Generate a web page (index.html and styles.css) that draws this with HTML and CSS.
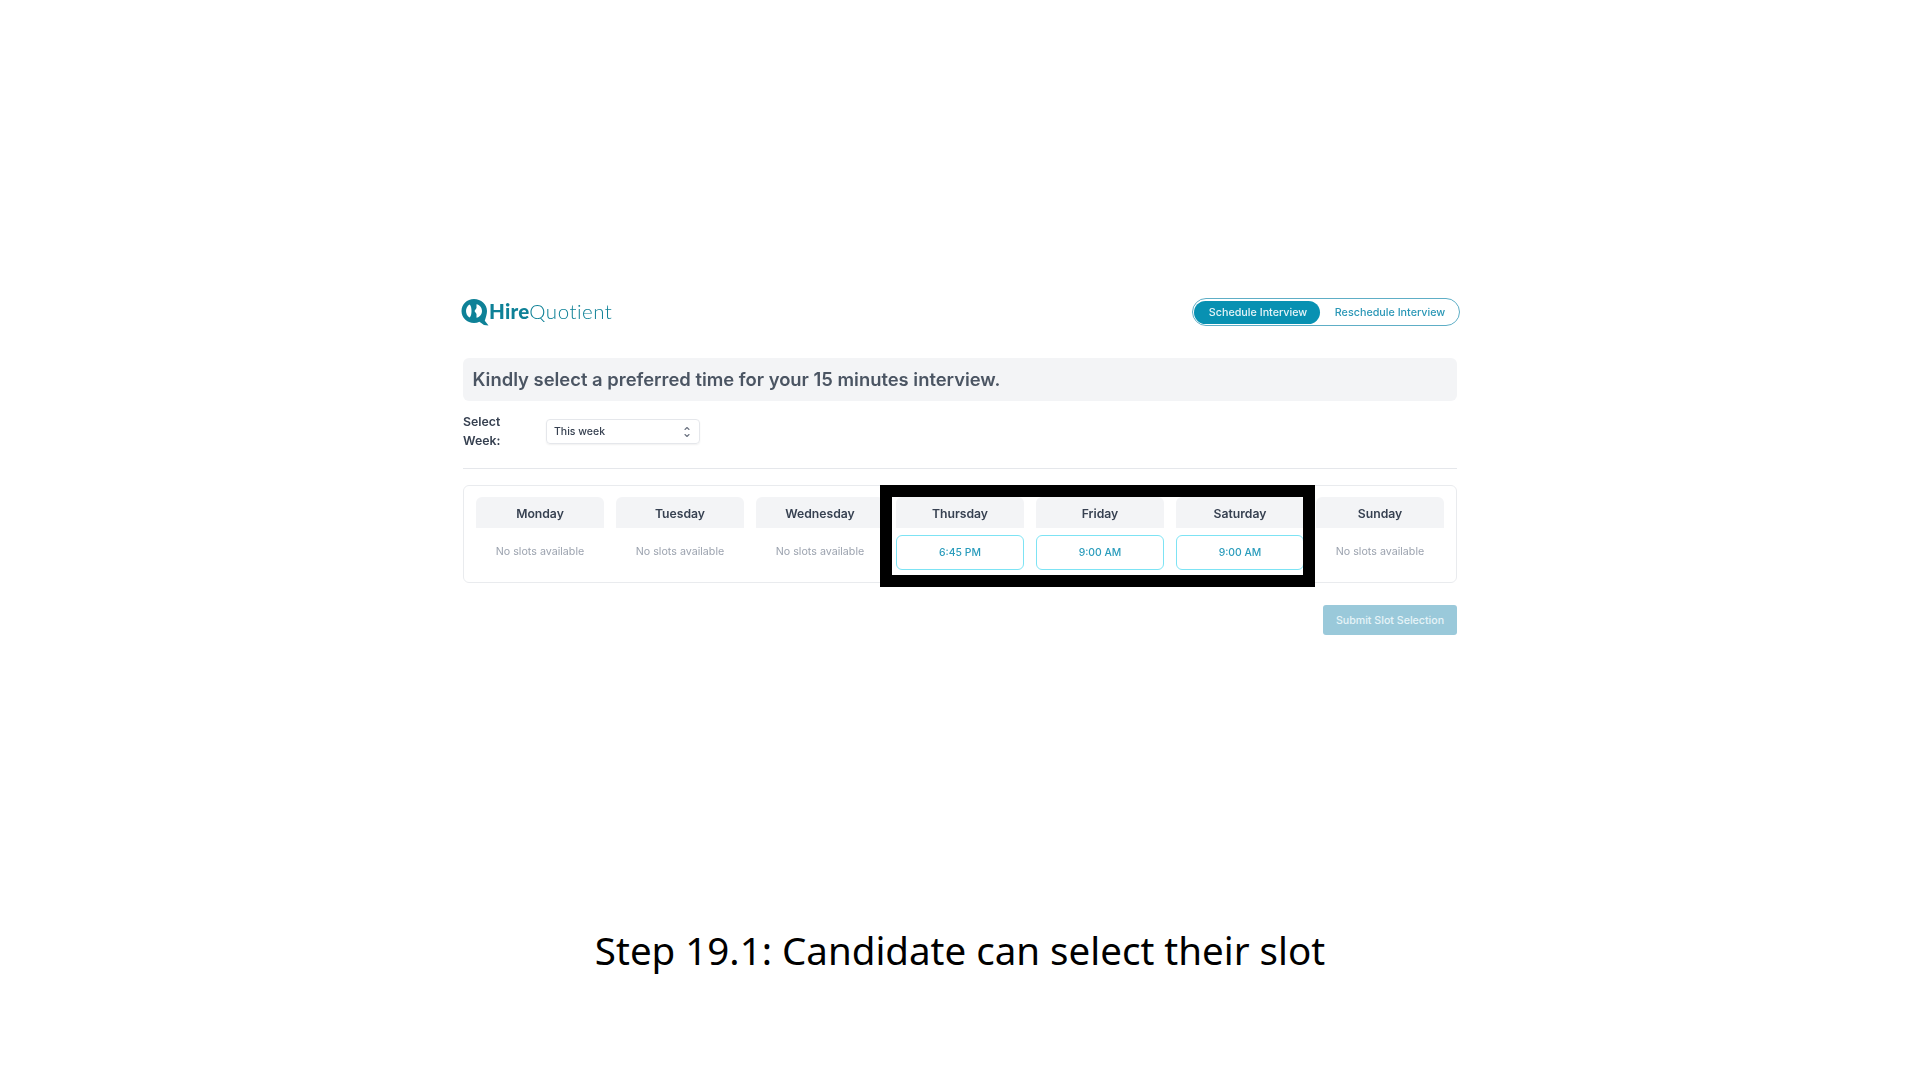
FILE: index.html
```html
<!DOCTYPE html>
<html lang="en">
<head>
<meta charset="utf-8">
<title>Step 19.1</title>
<link rel="stylesheet" href="styles.css">
</head>
<body>
<main class="shot">
  <div class="app">
    <header class="top">
      <div class="logo">
        <svg class="logo-mark" viewBox="0 0 28 28" aria-hidden="true">
          <path fill="#0e8197" d="M13 1C6 1 .5 6.400.5 13S6 25 13 25c2 0 3.800-.4 5.400-1.200L23 27l4.500.5-3.700-4.700C25 19 26 16 26 13 26 6.400 20 1 13 1Z"/>
          <path fill="#fff" d="M8.500 6.500C6.200 8 5 10.500 5 13s1.200 5 3.500 6.500c1.500-1.200 2-3.500 2-6.500s-.5-5.300-2-6.500ZM15.500 6.200c3 .6 5.500 3.300 5.500 6.800s-2.500 6.200-5.500 6.800v-3.800l-2-3 2-3Z"/>
        </svg>
        <span class="logo-text"><b>Hire</b>Quotient</span>
      </div>
      <nav class="toggle">
        <span class="toggle-item is-active">Schedule Interview</span>
        <span class="toggle-item">Reschedule Interview</span>
      </nav>
    </header>

    <h1 class="prompt">Kindly select a preferred time for your 15 minutes interview.</h1>

    <div class="week-row">
      <label class="week-label">Select Week:</label>
      <div class="select">
        <span>This week</span>
        <svg class="select-icon" viewBox="0 0 10 16" aria-hidden="true">
          <path d="M3 5.500 5 3.500l2 2M3 10.500l2 2 2-2" fill="none" stroke="#6b7280" stroke-width="1.100" stroke-linecap="round" stroke-linejoin="round"/>
        </svg>
      </div>
    </div>

    <hr class="rule">

    <section class="week">
      <div class="day"><h2 class="day-name">Monday</h2><p class="none">No slots available</p></div>
      <div class="day"><h2 class="day-name">Tuesday</h2><p class="none">No slots available</p></div>
      <div class="day"><h2 class="day-name">Wednesday</h2><p class="none">No slots available</p></div>
      <div class="day"><h2 class="day-name">Thursday</h2><button class="slot">6:45 PM</button></div>
      <div class="day"><h2 class="day-name">Friday</h2><button class="slot">9:00 AM</button></div>
      <div class="day"><h2 class="day-name">Saturday</h2><button class="slot">9:00 AM</button></div>
      <div class="day"><h2 class="day-name">Sunday</h2><p class="none">No slots available</p></div>
      <div class="highlight"></div>
    </section>

    <div class="actions">
      <button class="submit">Submit Slot Selection</button>
    </div>
  </div>

  <p class="caption">Step 19.1: Candidate can select their slot</p>
</main>
</body>
</html>
```
FILE: styles.css
```css
* { box-sizing: border-box; }
html, body { margin: 0; padding: 0; background: #fff; }
body { font-family: Inter, "Liberation Sans", sans-serif; color: #374151; }

.shot {
  width: 994px;
  height: 1080px;
  margin: 0 auto;
  padding-top: 298px;
  display: flex;
  flex-direction: column;
}
.app { filter: blur(0.35px); }

.top {
  height: 28px;
  display: flex;
  justify-content: space-between;
  align-items: center;
  margin-right: -3px;
}
.logo { display: flex; align-items: center; margin-left: -2px; }
.logo-mark { width: 28px; height: 28px; display: block; }
.logo-text {
  font-family: Lato, sans-serif;
  font-size: 20.500px;
  font-weight: 300;
  line-height: 24px;
  color: #0e8197;
  letter-spacing: 0.5px;
  position: relative;
  top: -1px;
}
.logo-text b { font-weight: 900; color: #0e8197; letter-spacing: 0.2px; }

.toggle {
  height: 28px;
  width: 268px;
  padding: 1.500px 1.500px 1.500px 0.500px;
  display: flex;
  align-items: stretch;
  border: 1px solid #5eaec6;
  border-radius: 14px;
}
.toggle-item {
  display: flex;
  align-items: center;
  justify-content: center;
  padding-left: 3px;
  font-size: 10.750px;
  font-weight: 500;
  color: #2a97b6;
  flex: 1;
}
.toggle-item.is-active {
  flex: 0 0 126px;
  background: #0891b2;
  color: #e6f4f8;
  border-radius: 12px;
}

.prompt {
  margin: 32px 0 0;
  height: 43px;
  padding: 0 9.500px 2px;
  display: flex;
  align-items: center;
  background: #f3f4f6;
  border-radius: 6px;
  font-size: 18.400px;
  font-weight: 600;
  color: #4b5563;
}

.week-row {
  margin-top: 12px;
  display: flex;
  align-items: center;
}
.week-label {
  width: 83px;
  padding-right: 30px;
  font-size: 12.300px;
  font-weight: 600;
  line-height: 18.500px;
  color: #374151;
}
.select {
  width: 154px;
  height: 25px;
  padding: 0 7px;
  display: flex;
  align-items: center;
  justify-content: space-between;
  border: 1px solid #e5e7eb;
  border-radius: 4px;
  box-shadow: 0 1px 2px rgba(0, 0, 0, 0.06);
  font-size: 10.500px;
  font-weight: 500;
  color: #374151;
}
.select-icon { width: 10px; height: 16px; display: block; }

.rule {
  margin: 18px 0 0;
  border: 0;
  border-top: 1px solid #e5e7eb;
}

.week {
  position: relative;
  margin-top: 16px;
  height: 98px;
  padding: 11px 12px 12px;
  display: grid;
  grid-template-columns: repeat(7, 1fr);
  column-gap: 12px;
  align-content: start;
  border: 1px solid #e9ebee;
  border-radius: 6px;
}
.day { display: flex; flex-direction: column; min-width: 0; }
.day-name {
  margin: 0;
  height: 31px;
  padding-top: 1px;
  display: flex;
  align-items: center;
  justify-content: center;
  background: #f3f4f6;
  border-radius: 6px 6px 0 0;
  font-size: 12.200px;
  font-weight: 600;
  color: #374151;
}
.none {
  margin: 16px 0 0;
  text-align: center;
  font-size: 10.700px;
  line-height: 16px;
  color: #9ca3af;
}
.slot {
  margin-top: 7px;
  height: 35px;
  padding: 0;
  background: #fff;
  border: 1px solid #7de3f4;
  border-radius: 6px;
  font-family: inherit;
  font-size: 10.400px;
  font-weight: 500;
  color: #2a9cbc;
}
.highlight {
  position: absolute;
  left: 416px;
  top: -1px;
  width: 435px;
  height: 102px;
  border: 12px solid #000;
}

.actions {
  margin-top: 22px;
  display: flex;
  justify-content: flex-end;
}
.submit {
  width: 134px;
  height: 30px;
  padding: 0;
  background: #9ac9da;
  border: 0;
  border-radius: 3px;
  font-family: inherit;
  font-size: 10.650px;
  font-weight: 500;
  color: #e6f4f8;
}

.caption {
  margin: 290px 0 0;
  text-align: center;
  font-family: "Noto Sans", sans-serif;
  font-size: 38.500px;
  line-height: 50px;
  color: #000;
}
```
